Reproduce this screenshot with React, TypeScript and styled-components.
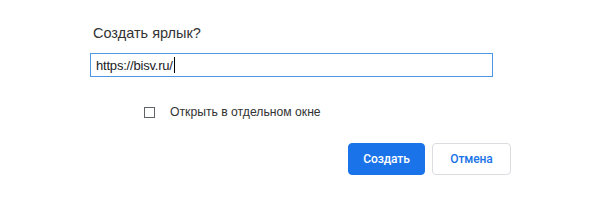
import React, { useState } from 'react';
import styled, { createGlobalStyle } from 'styled-components';

const GlobalStyle = createGlobalStyle`
  html, body {
    margin: 0;
    padding: 0;
    background: #ffffff;
  }
  body {
    font-family: "Noto Sans", "Liberation Sans", sans-serif;
  }
`;

const App = () => {
  const [url] = useState<string>('https://bisv.ru/');
  const [newWindow, setNewWindow] = useState<boolean>(false);

  return (
    <>
      <GlobalStyle />
      <Dialog>
        <Title>Создать ярлык?</Title>
        <UrlField>
          <UrlText>{url}</UrlText>
          <Caret />
        </UrlField>
        <CheckRow onClick={() => setNewWindow(!newWindow)}>
          <CheckBox $checked={newWindow} />
          <CheckLabel>Открыть в отдельном окне</CheckLabel>
        </CheckRow>
        <Actions>
          <ActionButton $primary $width={77}>Создать</ActionButton>
          <ActionButton $width={79}>Отмена</ActionButton>
        </Actions>
      </Dialog>
    </>
  );
};

const Dialog = styled.div`
  width: 421px;
  padding: 23px 0 0 90px;
  display: flex;
  flex-direction: column;
`;

const Title = styled.div`
  padding-left: 3px;
  font-family: "Liberation Sans", Arial, sans-serif;
  font-size: 14.5px;
  line-height: 20px;
  color: #333333;
`;

const UrlField = styled.div`
  margin-top: 10px;
  width: 403px;
  height: 24px;
  box-sizing: border-box;
  border: 1px solid #4c96e3;
  display: flex;
  align-items: center;
  padding-left: 5px;
`;

const UrlText = styled.span`
  font-family: "Liberation Sans", Arial, sans-serif;
  font-size: 13px;
  letter-spacing: -0.2px;
  color: #202124;
`;

const Caret = styled.span`
  width: 1px;
  height: 16px;
  background: #000000;
  margin-left: 1px;
`;

const CheckRow = styled.div`
  margin-top: 28px;
  padding-left: 54px;
  display: flex;
  align-items: center;
  gap: 15px;
  cursor: default;
`;

const CheckBox = styled.span<{ $checked: boolean }>`
  width: 11px;
  height: 11px;
  box-sizing: border-box;
  border: 1.5px solid #5f6368;
  background: ${(p) => (p.$checked ? '#1a73e8' : 'transparent')};
`;

const CheckLabel = styled.span`
  font-family: "Liberation Sans", Arial, sans-serif;
  font-size: 12.2px;
  color: #333333;
`;

const Actions = styled.div`
  margin-top: 24px;
  display: flex;
  justify-content: flex-end;
  gap: 7px;
`;

const ActionButton = styled.button<{ $primary?: boolean; $width: number }>`
  height: 32px;
  width: ${(p) => p.$width}px;
  padding: 0;
  box-sizing: border-box;
  border-radius: 4px;
  font-family: Roboto, "Noto Sans", sans-serif;
  font-size: 12px;
  font-weight: 500;
  letter-spacing: -0.1px;
  border: 1px solid ${(p) => (p.$primary ? '#1a73e8' : '#dadce0')};
  background: ${(p) => (p.$primary ? '#1a73e8' : '#ffffff')};
  color: ${(p) => (p.$primary ? '#ffffff' : '#1a73e8')};
`;

export default App;
